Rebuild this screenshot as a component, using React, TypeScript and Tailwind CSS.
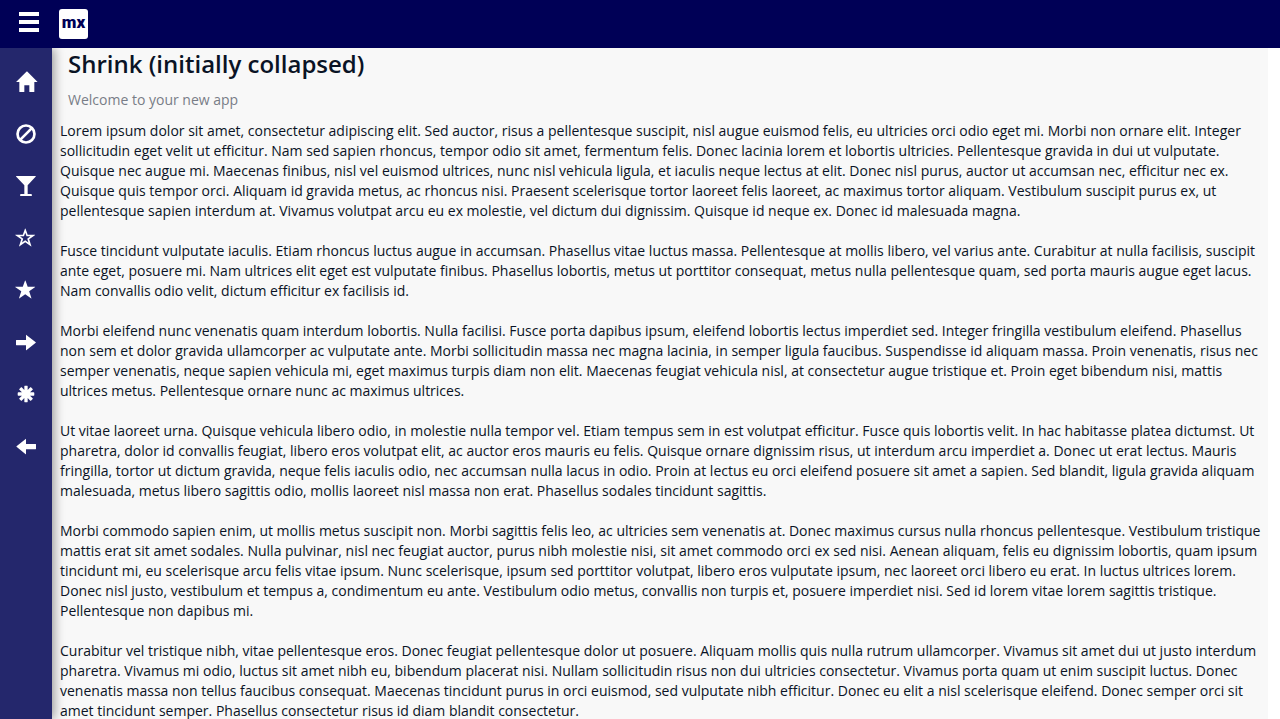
import type { ReactNode } from "react";

const STAR =
  "M407 800l131 353q7 19 17.5 19t17.5 -19l129 -353h421q21 0 24 -8.5t-14 -20.5l-342 -249l130 -401q7 -20 -0.5 -25.5t-24.5 6.5l-343 246l-342 -247q-17 -12 -24.5 -6.5t-0.5 25.5l130 400l-347 251q-17 12 -14 20.5t23 8.5h429z";

const items: { label: string; icon: ReactNode }[] = [
  {
    label: "Home",
    icon: (
      <path d="M18 618l620 608q8 7 18.5 7t17.5 -7l608 -608q8 -8 5.5 -13t-12.5 -5h-175v-575q0 -10 -7.5 -17.5t-17.5 -7.5h-250q-10 0 -17.5 7.5t-7.5 17.5v375h-300v-375q0 -10 -7.5 -17.5t-17.5 -7.5h-250q-10 0 -17.5 7.5t-7.5 17.5v575h-175q-10 0 -12.5 5t5.5 13z" />
    ),
  },
  {
    label: "Blocked",
    icon: (
      <g fill="none" stroke="currentColor" strokeWidth="160">
        <circle cx="600" cy="600" r="508" />
        <path d="M250 250L950 950" />
      </g>
    ),
  },
  {
    label: "Drinks",
    icon: (
      <path d="M20 1200h1150q20 0 20 -15t-15 -30l-475 -515v-520h210q40 0 40 -40v-80h-700v80q0 40 40 40h210v520l-485 515q-15 15 -15 30t20 15z" />
    ),
  },
  {
    label: "Watch list",
    icon: (
      <path
        fillRule="evenodd"
        d={STAR + "M477 700h-240l197 -142l-74 -226l193 139l195 -140l-74 229l192 140h-234l-78 211z"}
      />
    ),
  },
  { label: "Favorites", icon: <path d={STAR} /> },
  {
    label: "Next",
    icon: (
      <path d="M25 725h575v290q0 25 20 10l565 -440q15 -15 0 -30l-565 -445q-20 -15 -20 10v285h-575q-25 0 -25 25v270q0 25 25 25z" />
    ),
  },
  {
    label: "Other",
    icon: (
      <path d="M600 1100q15 0 34 -1.5t30 -3.5l11 -1q10 -2 17.5 -10.5t7.5 -18.5v-224l158 158q7 7 18 8t19 -6l106 -106q7 -8 6 -19t-8 -18l-158 -158h224q10 0 18.5 -7.5t10.5 -17.5q6 -41 6 -75q0 -15 -1.5 -34t-3.5 -30l-1 -11q-2 -10 -10.5 -17.5t-18.5 -7.5h-224l158 -158q7 -7 8 -18t-6 -19l-106 -106q-8 -7 -19 -6t-18 8l-158 158v-224q0 -10 -7.5 -18.5t-17.5 -10.5q-41 -6 -75 -6q-15 0 -34 1.5t-30 3.5l-11 1q-10 2 -17.5 10.5t-7.5 18.5v224l-158 -158q-7 -7 -18 -8t-19 6l-106 106q-7 8 -6 19t8 18l158 158h-224q-10 0 -18.5 7.5t-10.5 17.5q-6 41 -6 75q0 15 1.5 34t3.5 30l1 11q2 10 10.5 17.5t18.5 7.5h224l-158 158q-7 7 -8 18t6 19l106 106q8 7 19 6t18 -8l158 -158v224q0 10 7.5 18.5t17.5 10.5q41 6 75 6z" />
    ),
  },
  {
    label: "Back",
    icon: (
      <path d="M1175 725h-575v290q0 25 -20 10l-550 -440q-15 -15 0 -30l550 -445q20 -15 20 10v285h575q25 0 25 25v270q0 25 -25 25z" />
    ),
  },
];

const paragraphs = [
  "Lorem ipsum dolor sit amet, consectetur adipiscing elit. Sed auctor, risus a pellentesque suscipit, nisl augue euismod felis, eu ultricies orci odio eget mi. Morbi non ornare elit. Integer sollicitudin eget velit ut efficitur. Nam sed sapien rhoncus, tempor odio sit amet, fermentum felis. Donec lacinia lorem et lobortis ultricies. Pellentesque gravida in dui ut vulputate. Quisque nec augue mi. Maecenas finibus, nisl vel euismod ultrices, nunc nisl vehicula ligula, et iaculis neque lectus at elit. Donec nisl purus, auctor ut accumsan nec, efficitur nec ex. Quisque quis tempor orci. Aliquam id gravida metus, ac rhoncus nisi. Praesent scelerisque tortor laoreet felis laoreet, ac maximus tortor aliquam. Vestibulum suscipit purus ex, ut pellentesque sapien interdum at. Vivamus volutpat arcu eu ex molestie, vel dictum dui dignissim. Quisque id neque ex. Donec id malesuada magna.",
  "Fusce tincidunt vulputate iaculis. Etiam rhoncus luctus augue in accumsan. Phasellus vitae luctus massa. Pellentesque at mollis libero, vel varius ante. Curabitur at nulla facilisis, suscipit ante eget, posuere mi. Nam ultrices elit eget est vulputate finibus. Phasellus lobortis, metus ut porttitor consequat, metus nulla pellentesque quam, sed porta mauris augue eget lacus. Nam convallis odio velit, dictum efficitur ex facilisis id.",
  "Morbi eleifend nunc venenatis quam interdum lobortis. Nulla facilisi. Fusce porta dapibus ipsum, eleifend lobortis lectus imperdiet sed. Integer fringilla vestibulum eleifend. Phasellus non sem et dolor gravida ullamcorper ac vulputate ante. Morbi sollicitudin massa nec magna lacinia, in semper ligula faucibus. Suspendisse id aliquam massa. Proin venenatis, risus nec semper venenatis, neque sapien vehicula mi, eget maximus turpis diam non elit. Maecenas feugiat vehicula nisl, at consectetur augue tristique et. Proin eget bibendum nisi, mattis ultrices metus. Pellentesque ornare nunc ac maximus ultrices.",
  "Ut vitae laoreet urna. Quisque vehicula libero odio, in molestie nulla tempor vel. Etiam tempus sem in est volutpat efficitur. Fusce quis lobortis velit. In hac habitasse platea dictumst. Ut pharetra, dolor id convallis feugiat, libero eros volutpat elit, ac auctor eros mauris eu felis. Quisque ornare dignissim risus, ut interdum arcu imperdiet a. Donec ut erat lectus. Mauris fringilla, tortor ut dictum gravida, neque felis iaculis odio, nec accumsan nulla lacus in odio. Proin at lectus eu orci eleifend posuere sit amet a sapien. Sed blandit, ligula gravida aliquam malesuada, metus libero sagittis odio, mollis laoreet nisl massa non erat. Phasellus sodales tincidunt sagittis.",
  "Morbi commodo sapien enim, ut mollis metus suscipit non. Morbi sagittis felis leo, ac ultricies sem venenatis at. Donec maximus cursus nulla rhoncus pellentesque. Vestibulum tristique mattis erat sit amet sodales. Nulla pulvinar, nisl nec feugiat auctor, purus nibh molestie nisi, sit amet commodo orci ex sed nisi. Aenean aliquam, felis eu dignissim lobortis, quam ipsum tincidunt mi, eu scelerisque arcu felis vitae ipsum. Nunc scelerisque, ipsum sed porttitor volutpat, libero eros vulputate ipsum, nec laoreet orci libero eu erat. In luctus ultrices lorem. Donec nisl justo, vestibulum et tempus a, condimentum eu ante. Vestibulum odio metus, convallis non turpis et, posuere imperdiet nisi. Sed id lorem vitae lorem sagittis tristique. Pellentesque non dapibus mi.",
  "Curabitur vel tristique nibh, vitae pellentesque eros. Donec feugiat pellentesque dolor ut posuere. Aliquam mollis quis nulla rutrum ullamcorper. Vivamus sit amet dui ut justo interdum pharetra. Vivamus mi odio, luctus sit amet nibh eu, bibendum placerat nisi. Nullam sollicitudin risus non dui ultricies consectetur. Vivamus porta quam ut enim suscipit luctus. Donec venenatis massa non tellus faucibus consequat. Maecenas tincidunt purus in orci euismod, sed vulputate nibh efficitur. Donec eu elit a nisl scelerisque eleifend. Donec semper orci sit amet tincidunt semper. Phasellus consectetur risus id diam blandit consectetur.",
];

function TopBar() {
  return (
    <header className="flex h-12 shrink-0 items-center gap-5 bg-[#000056] pl-[19px]">
      <button type="button" aria-label="Toggle menu" className="flex w-5 flex-col gap-1 pb-1">
        <span className="h-1 bg-white" />
        <span className="h-1 bg-white" />
        <span className="h-1 bg-white" />
      </button>
      <a
        href="#home"
        className="flex h-[30px] w-[29px] items-center justify-center rounded-[3px] bg-white pb-1 font-['Roboto',sans-serif] text-[17px] leading-none font-black text-[#000056]"
      >
        mx
      </a>
    </header>
  );
}

function SideBar() {
  return (
    <nav className="z-10 w-[52px] shrink-0 bg-[#24276c] pt-2 text-white shadow-[2px_0_10px_rgba(0,0,0,0.4)]">
      <ul>
        {items.map(({ label, icon }) => (
          <li key={label}>
            <a href="#page" aria-label={label} className="flex h-[52px] items-center justify-center">
              <svg viewBox="-120 -1320 1440 1440" className="size-6 fill-current" aria-hidden="true">
                <g transform="scale(1 -1)">{icon}</g>
              </svg>
            </a>
          </li>
        ))}
      </ul>
    </nav>
  );
}

export default function App() {
  return (
    <div className="flex h-screen flex-col bg-white font-['Open_Sans',sans-serif] text-sm text-[#0a1325] antialiased">
      <TopBar />
      <div className="flex min-h-0 flex-1 overflow-hidden">
        <SideBar />
        <main className="mr-3 flex-1 overflow-y-auto bg-[#f8f8f8] pr-1.5 pl-2 [scrollbar-width:none]">
          <div className="px-2">
            <h1 className="text-2xl leading-8 font-semibold">Shrink (initially collapsed)</h1>
            <p className="mt-2 leading-6 text-[#787d87]">Welcome to your new app</p>
          </div>
          <div className="mt-[9px] space-y-5 pb-2 leading-5">
            {paragraphs.map((text) => (
              <p key={text}>{text}</p>
            ))}
          </div>
        </main>
      </div>
    </div>
  );
}
